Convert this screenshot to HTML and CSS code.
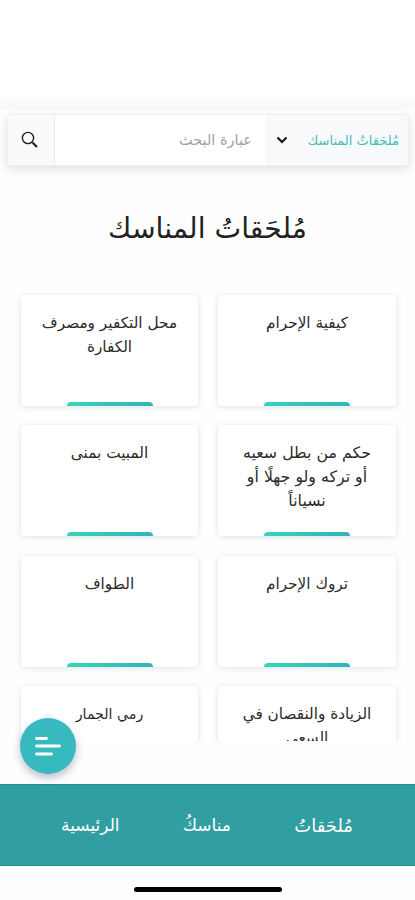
FILE: index.html
```html
<!DOCTYPE html>
<html lang="ar" dir="rtl">
<head>
<meta charset="utf-8">
<meta name="viewport" content="width=device-width, initial-scale=1">
<title>مُلحَقاتُ المناسك</title>
<link rel="stylesheet" href="styles.css">
</head>
<body>
<main class="content">
  <form class="search">
    <div class="scope"><span>مُلحَقاتُ المناسك</span>
      <svg class="chevron" viewBox="0 0 12 8"><path d="M1.500 1.500 6 6l4.500-4.500"/></svg>
    </div>
    <div class="field">عبارة البحث</div>
    <div class="submit">
      <svg class="lens" viewBox="0 0 18 18"><circle cx="7" cy="7" r="5.600"/><path class="handle" d="m11.500 11.500 4.500 4.500"/></svg>
    </div>
  </form>
  <h1 class="title">مُلحَقاتُ المناسك</h1>
  <section class="grid">
    <article class="card">كيفية الإحرام</article>
    <article class="card">محل التكفير ومصرف<br>الكفارة</article>
    <article class="card card-long">حكم من بطل سعيه<br>أو تركه ولو جهلًا أو<br>نسياناً</article>
    <article class="card">المبيت بمنى</article>
    <article class="card">تروك الإحرام</article>
    <article class="card">الطواف</article>
    <article class="card">الزيادة والنقصان في<br>السعي</article>
    <article class="card card-short">رمي الجمار</article>
  </section>
</main>
<button class="fab" aria-label="القائمة">
  <svg viewBox="0 0 28 20"><path d="M2.500 2.500h10M2.500 10h23M2.500 18h15"/></svg>
</button>
<nav class="tabs">
  <a class="current">مُلحَقاتُ</a><a>مناسكُ</a><a>الرئيسية</a>
</nav>
<div class="home"></div>
</body>
</html>
```
FILE: styles.css
```css
* { box-sizing: border-box; }
body {
  margin: 0;
  height: 900px;
  overflow: hidden;
  display: flex;
  flex-direction: column;
  position: relative;
  background: #fefefe;
  color: #2b2b2b;
  font-family: "DejaVu Sans", sans-serif;
}
.content {
  height: 741px;
  flex: none;
  overflow: hidden;
  padding-top: 114px;
  background: linear-gradient(#fff 0 94px, #f5f8fa 108px, #fefefe 110px);
}
.search {
  display: flex;
  height: 52px;
  margin: 0 6px 0 7px;
  border: 1px solid #eef0f2;
  border-radius: 4px;
  background: #fff;
  box-shadow: 0 3px 10px rgba(60, 90, 115, .18);
}
.scope {
  width: 142px;
  display: flex;
  align-items: center;
  justify-content: space-between;
  padding: 0 9px 0 10px;
  background: #f7f9fb;
  color: #45bdb9;
  font-size: 13px;
  white-space: nowrap;
}
.chevron {
  width: 12px;
  height: 8px;
  fill: none;
  stroke: #111;
  stroke-width: 2;
}
.field {
  flex: 1;
  padding: 0 14px;
  line-height: 50px;
  font-size: 14.5px;
  color: #a2a2a2;
}
.submit {
  width: 47px;
  display: flex;
  align-items: center;
  justify-content: center;
  padding-right: 2px;
  border-right: 1px solid #e8eaec;
  background: #f9fafb;
}
.lens {
  width: 18px;
  height: 18px;
  fill: none;
  stroke: #222;
  stroke-width: 1.4;
}
.handle { stroke-width: 2.2; }
.title {
  margin: 38px 0 0;
  height: 50px;
  line-height: 50px;
  text-align: center;
  font-size: 28.3px;
  font-weight: 400;
  color: #222;
}
.grid {
  display: grid;
  grid-template-columns: 178px 177px;
  grid-auto-rows: 111px;
  gap: 19.4px 20px;
  padding: 41px 19px 0 0;
}
.card {
  position: relative;
  padding-top: 16px;
  border-radius: 4px;
  background: #fff;
  box-shadow: 0 1px 6px rgba(60, 90, 110, .17);
  text-align: center;
  font-size: 15.3px;
  line-height: 24px;
  white-space: nowrap;
}
.card-long { font-size: 15.8px; }
.card-short { font-size: 14.2px; }
.card::after {
  content: "";
  position: absolute;
  bottom: 0;
  left: 26%;
  width: 86px;
  height: 4px;
  border-radius: 4px 4px 0 0;
  background: linear-gradient(90deg, #36d4b9, #30b4b8);
}
.fab {
  position: absolute;
  left: 20px;
  top: 718px;
  width: 56px;
  height: 56px;
  padding: 0;
  border: 0;
  border-radius: 50%;
  background: #36babf;
  box-shadow: 0 4px 9px rgba(50, 75, 120, .35);
  display: flex;
  align-items: center;
  justify-content: center;
}
.fab svg {
  width: 28px;
  height: 20px;
  fill: none;
  stroke: #fff;
  stroke-width: 2.8;
  stroke-linecap: round;
}
.tabs {
  flex: none;
  height: 82px;
  margin-top: 43px;
  padding: 0 62px 0 61px;
  display: flex;
  justify-content: space-between;
  align-items: center;
  border: solid #1d9299;
  border-width: 1px 0;
  background: #319ea2;
  color: #fff;
  font-size: 17px;
}
.current { font-size: 18px; }
.home {
  width: 148px;
  height: 5px;
  margin: 21px auto 0;
  border-radius: 3px;
  background: #000;
}
```
